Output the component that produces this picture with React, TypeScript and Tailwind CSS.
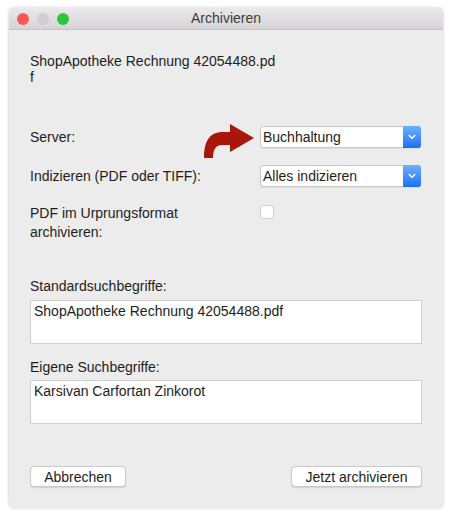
const font = { fontFamily: '"Liberation Sans", Arial, sans-serif' }

function Chevron() {
  return (
    <svg width="8" height="6" viewBox="0 0 8 6" fill="none">
      <path d="M1.2 1.5 L4 4.3 L6.8 1.5" stroke="white" strokeWidth="1.5" strokeLinecap="round" strokeLinejoin="round" />
    </svg>
  )
}

function Select({ value }: { value: string }) {
  return (
    <div className="flex h-[22px] w-[161px] items-stretch rounded-[3px] border border-[#c8c8c8] bg-white shadow-[0_1px_0_rgba(0,0,0,0.05)]">
      <div className="flex flex-1 items-center pl-[2px] text-[14px] text-[#1d1d1d]">{value}</div>
      <div className="-my-px -mr-px flex w-[18px] items-center justify-center rounded-r-[3px] bg-gradient-to-b from-[#6cb0fd] to-[#1b6ff5]">
        <Chevron />
      </div>
    </div>
  )
}

function Arrow() {
  return (
    <svg width="54" height="36" viewBox="0 0 54 36" className="absolute left-[-58px] top-[-2px]">
      <path
        d="M2 34 C2 18 7 8 21 8 L28 8 L28 0 L52 14 L28 28 L28 21 L20 21 C14 21 11 25 11 34 Z"
        fill="#a8160c"
      />
    </svg>
  )
}

function Button({ label, width }: { label: string; width: string }) {
  return (
    <button
      className={`h-[21px] ${width} rounded-[4px] border border-[#c9c9c9] bg-white text-[14px] text-[#1d1d1d] shadow-[0_1px_1px_rgba(0,0,0,0.12)]`}
    >
      {label}
    </button>
  )
}

export default function App() {
  return (
    <div className="min-h-[522px] w-[459px] bg-white pt-[8px] pl-[9px]" style={font}>
      <div className="flex h-[500px] w-[434px] flex-col overflow-hidden rounded-[5px] bg-[#ececec] shadow-[0_0_3px_rgba(0,0,0,0.25)]">
        <div className="relative flex h-[22px] items-center justify-center border-b border-[#c4c4c4] bg-gradient-to-b from-[#ebe9eb] to-[#d5d3d5]">
          <div className="absolute left-[8px] top-[5px] flex gap-[8px]">
            <span className="h-[12px] w-[12px] rounded-full bg-[#fc5753]" />
            <span className="h-[12px] w-[12px] rounded-full bg-[#d0cfd0]" />
            <span className="h-[12px] w-[12px] rounded-full bg-[#28c73f]" />
          </div>
          <span className="text-[14px] text-[#3b3b3b]">Archivieren</span>
        </div>

        <div className="flex flex-1 flex-col px-[21px] pt-[23px] text-[14px] text-[#1d1d1d]">
          <div className="leading-[16px]">
            ShopApotheke Rechnung 42054488.pd
            <br />
            f
          </div>

          <div className="mt-[41px] grid grid-cols-[230px_161px] items-center gap-y-[17px]">
            <div className="leading-[22px]">Server:</div>
            <div className="relative">
              <Arrow />
              <Select value="Buchhaltung" />
            </div>

            <div className="leading-[22px]">Indizieren (PDF oder TIFF):</div>
            <Select value="Alles indizieren" />

            <div className="self-start leading-[19px]">
              PDF im Urprungsformat
              <br />
              archivieren:
            </div>
            <div className="self-start pt-[1px]">
              <div className="h-[14px] w-[14px] rounded-[3px] border border-[#cfcfcf] bg-white" />
            </div>
          </div>

          <div className="mt-[36px] leading-[17px]">Standardsuchbegriffe:</div>
          <div className="mt-[5px] h-[44px] border border-[#cfcfcf] bg-white px-[3px] pt-[2px] leading-[17px]">
            ShopApotheke Rechnung 42054488.pdf
          </div>

          <div className="mt-[15px] leading-[17px]">Eigene Suchbegriffe:</div>
          <div className="mt-[4px] h-[44px] border border-[#cfcfcf] bg-white px-[3px] pt-[2px] leading-[17px]">
            Karsivan Carfortan Zinkorot
          </div>

          <div className="mt-[42px] flex justify-between">
            <Button label="Abbrechen" width="w-[96px]" />
            <Button label="Jetzt archivieren" width="w-[131px]" />
          </div>
        </div>
      </div>
    </div>
  )
}
